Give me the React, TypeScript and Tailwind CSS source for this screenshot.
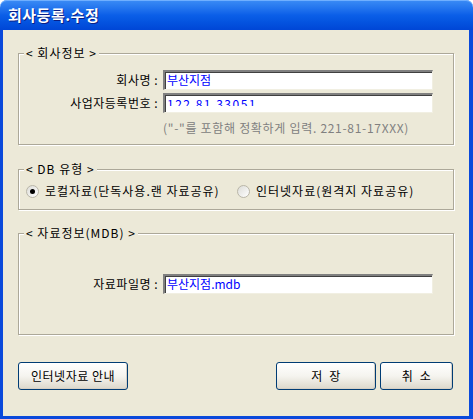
import React from "react";

const font = { fontFamily: '"Noto Sans CJK KR", "Noto Sans", sans-serif' };

function Group({ title, className, children }: { title: string; className: string; children: React.ReactNode }) {
  return (
    <div
      className={`relative mx-[15px] border border-[#ACA899] shadow-[inset_1px_1px_0_#ffffff,1px_1px_0_#ffffff] ${className}`}
    >
      <span className="absolute left-[5px] top-[-9px] bg-[#ECE9D8] px-[2px] text-[12px] leading-[16px] tracking-[1px] text-black whitespace-pre">
        {title}
      </span>
      {children}
    </div>
  );
}

function Field({ label, children }: { label: string; children: React.ReactNode }) {
  return (
    <div className="flex items-center">
      <span className="w-[139px] text-right text-[12px] leading-[16px] tracking-[0.5px] text-black whitespace-pre">{label}</span>
      <div className="ml-[5px] h-[20px] w-[270px] border-t-2 border-l-2 border-t-[#808080] border-l-[#808080] border-b border-r border-b-[#F1EFE2] border-r-[#F1EFE2] bg-white shadow-[inset_1px_1px_0_#404040] overflow-hidden">
        {children}
      </div>
    </div>
  );
}

function Radio({ checked, label, className = "" }: { checked?: boolean; label: string; className?: string }) {
  return (
    <div className={`flex items-center gap-[6px] ${className}`}>
      <span className="flex h-[13px] w-[13px] items-center justify-center rounded-full border border-[#B9B6A8] bg-gradient-to-br from-[#DCDCD7] to-white">
        {checked && <span className="h-[5px] w-[5px] rounded-full bg-black" />}
      </span>
      <span className="text-[12px] leading-[16px] tracking-[1px] text-black whitespace-pre">{label}</span>
    </div>
  );
}

function XPButton({ label, className }: { label: string; className: string }) {
  return (
    <button
      className={`h-[28px] rounded-[3px] border border-[#003C74] bg-gradient-to-b from-white via-[#F5F4EF] to-[#DCD8CB] text-[12px] leading-[16px] tracking-[0.5px] text-black shadow-[inset_-1px_-1px_0_#D6D0C5] whitespace-pre ${className}`}
    >
      {label}
    </button>
  );
}

export default function App() {
  return (
    <div className="flex h-[419px] w-[473px] flex-col bg-white" style={font}>
      <div className="flex h-[30px] items-center rounded-t-[7px] bg-gradient-to-b from-[#3B8CF5] via-[#0B5FE8] to-[#0046D6] pl-[8px] shadow-[inset_0_1px_0_#6FAFFF]">
        <span className="text-[15px] font-bold leading-[18px] tracking-[0.5px] text-white [text-shadow:1px_1px_0_#0A1E84]">
          회사등록.수정
        </span>
      </div>
      <div className="flex flex-1 flex-col border-x-[3px] border-b-[3px] border-[#0A49DB] border-r-4 bg-[#ECE9D8] pt-[23px]">
        <Group title="< 회사정보 >" className="h-[92px] pt-[16px]">
          <div className="flex flex-col gap-[3px]">
            <Field label="회사명 :">
              <div className="pl-[2px] text-[12px] leading-[16px] text-[#0000FF]">부산지점</div>
            </Field>
            <Field label="사업자등록번호 :">
              <div className="ml-[2px] mt-[3px] h-[8px] overflow-hidden">
                <div className="text-[12px] leading-[12px] tracking-[1.5px] text-[#0000FF] whitespace-pre">122 81 33051</div>
              </div>
            </Field>
            <div className="pl-[144px] pt-[4px] text-[12px] leading-[16px] tracking-[0.7px] text-[#808080] whitespace-pre">
              ("-"를 포함해 정확하게 입력. 221-81-17XXX)
            </div>
          </div>
        </Group>
        <Group title="< DB 유형 >" className="mt-[24px] flex h-[41px] items-center pl-[7px] pt-[3px]">
          <Radio checked label="로컬자료(단독사용.랜 자료공유)" className="w-[211px]" />
          <Radio label="인터넷자료(원격지 자료공유)" />
        </Group>
        <Group title="< 자료정보(MDB) >" className="mt-[23px] h-[102px] pt-[40px]">
          <Field label="자료파일명 :">
            <div className="pl-[2px] text-[12px] leading-[16px] text-[#0000FF]">부산지점.mdb</div>
          </Field>
        </Group>
        <div className="mt-[27px] flex pl-[15px]">
          <XPButton label="인터넷자료 안내" className="w-[110px]" />
          <XPButton label="저  장" className="ml-[148px] w-[100px]" />
          <XPButton label="취  소" className="ml-[4px] w-[73px]" />
        </div>
      </div>
    </div>
  );
}
